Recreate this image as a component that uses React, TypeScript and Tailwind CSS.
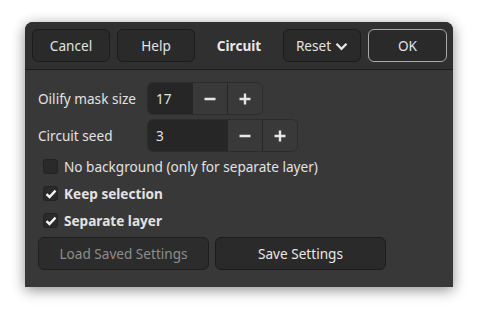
import React from "react";

const font = { fontFamily: '"Noto Sans", "DejaVu Sans", sans-serif' };

function HeaderButton({ label, ok, children }: { label: string; ok?: boolean; children?: React.ReactNode }) {
  return (
    <button
      className={`h-[33px] pt-[1px] rounded-[6px] bg-[#2a2a2a] text-[13.6px] text-[#e2e2e2] flex items-center justify-center gap-[6px] border ${
        ok ? "w-[79px] border-[#a8a8a8]" : "w-[78px] border-[#1c1c1c]"
      }`}
    >
      {label}
      {children}
    </button>
  );
}

function Minus() {
  return (
    <svg width="14" height="14" viewBox="0 0 14 14">
      <path d="M1.5 7h11" stroke="#e6e6e6" strokeWidth="2.4" />
    </svg>
  );
}

function Plus() {
  return (
    <svg width="14" height="14" viewBox="0 0 14 14">
      <path d="M1.5 7h11M7 1.5v11" stroke="#e6e6e6" strokeWidth="2.4" />
    </svg>
  );
}

function SpinBox({ value, entryWidth }: { value: string; entryWidth: string }) {
  return (
    <div className="justify-self-start flex h-[33px] rounded-[6px] border border-[#2c2c2c] overflow-hidden">
      <div className={`${entryWidth} bg-[#262626] flex items-center pl-[8px] pt-[1px] text-[13.6px] text-[#e2e2e2]`}>{value}</div>
      <div className="w-[35px] bg-[#393939] border-l border-[#262626] flex items-center justify-center">
        <Minus />
      </div>
      <div className="w-[35px] bg-[#393939] border-l border-[#262626] flex items-center justify-center">
        <Plus />
      </div>
    </div>
  );
}

function Check({ label, checked }: { label: string; checked?: boolean }) {
  return (
    <div className="flex items-center h-[27px] pl-[5px] gap-[6px]">
      <div className="w-[15px] h-[15px] rounded-[3px] bg-[#2a2a2a] border border-[#222] flex items-center justify-center">
        {checked && (
          <svg width="12" height="12" viewBox="0 0 12 12">
            <path d="M1.5 6.2l3 2.8 6-6.3" stroke="#f4f4f4" strokeWidth="2.4" fill="none" />
          </svg>
        )}
      </div>
      <span className={`pt-[1px] text-[13.6px] text-[#e2e2e2] ${checked ? "font-bold" : ""}`}>{label}</span>
    </div>
  );
}

export default function App() {
  return (
    <div className="w-[479px] h-[315px] bg-white pl-[25px] pt-[22px]" style={font}>
      <div className="w-[428px] h-[265px] rounded-t-[8px] overflow-hidden bg-[#383838] shadow-[0_3px_14px_rgba(0,0,0,0.45)] flex flex-col">
        <div className="h-[48px] bg-[#303030] border-b border-[#1f1f1f] flex items-center pl-[7px] pr-[6px]">
          <div className="flex gap-[7px]">
            <HeaderButton label="Cancel" />
            <HeaderButton label="Help" />
          </div>
          <div className="flex-1 pt-[1px] text-center text-[13.6px] font-bold text-[#e8e8e8]">Circuit</div>
          <div className="flex gap-[7px]">
            <HeaderButton label="Reset">
              <svg width="13" height="9" viewBox="0 0 13 9" className="-ml-[2px]">
                <path d="M1.5 1.8l5 5 5-5" stroke="#e6e6e6" strokeWidth="2.3" fill="none" />
              </svg>
            </HeaderButton>
            <HeaderButton label="OK" ok />
          </div>
        </div>
        <div className="flex-1 px-[13px] pt-[12px]">
          <div className="grid grid-cols-[109px_auto] gap-y-[4px] items-center justify-start">
            <span className="pt-[1px] text-[13.6px] text-[#e2e2e2]">Oilify mask size</span>
            <SpinBox value="17" entryWidth="w-[44px]" />
            <span className="pt-[1px] text-[13.6px] text-[#e2e2e2]">Circuit seed</span>
            <SpinBox value="3" entryWidth="w-[79px]" />
          </div>
          <div className="flex flex-col mt-[1px]">
            <Check label="No background (only for separate layer)" />
            <Check label="Keep selection" checked />
            <Check label="Separate layer" checked />
          </div>
          <div className="flex gap-[6px] mt-[3px]">
            <button className="w-[171px] h-[33px] pt-[1px] rounded-[6px] bg-[#2c2c2c] border border-[#1f1f1f] text-[13.6px] text-[#8c8c8c]">
              Load Saved Settings
            </button>
            <button className="w-[171px] h-[33px] pt-[1px] rounded-[6px] bg-[#2a2a2a] border border-[#1c1c1c] text-[13.6px] text-[#e8e8e8]">
              Save Settings
            </button>
          </div>
        </div>
      </div>
    </div>
  );
}
